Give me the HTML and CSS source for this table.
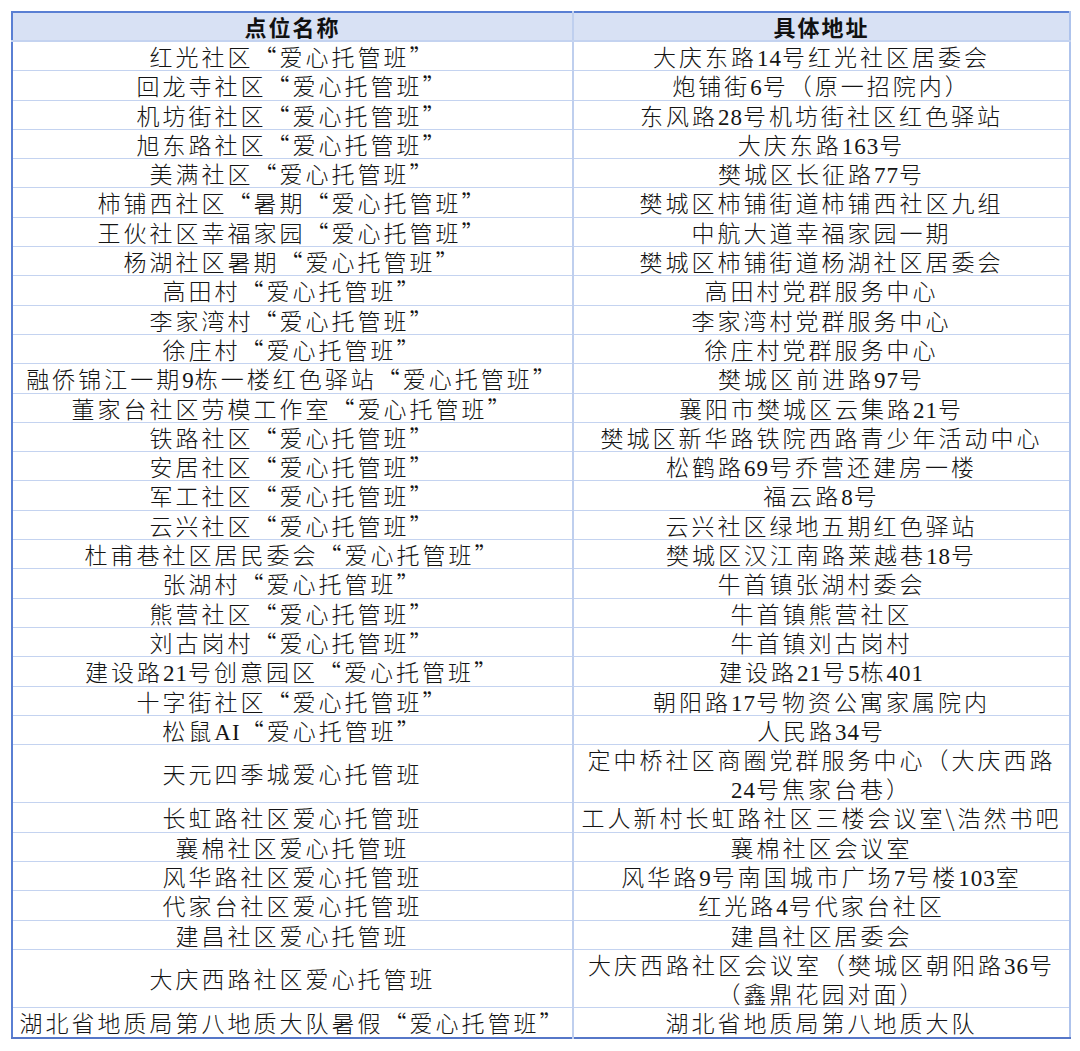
FILE: index.html
```html
<!DOCTYPE html>
<html lang="zh-CN">
<head>
<meta charset="utf-8">
<title>爱心托管班点位</title>
<link rel="stylesheet" href="styles.css">
</head>
<body>
<div class="wrap">
<table class="sheet">
<colgroup><col class="c-name"><col class="c-addr"></colgroup>
<thead>
<tr><th>点位名称</th><th class="addr">具体地址</th></tr>
</thead>
<tbody>
<tr><td>红光社区“爱心托管班”</td><td class="addr">大庆东路<span class="n">14</span>号红光社区居委会</td></tr>
<tr><td>回龙寺社区“爱心托管班”</td><td class="addr">炮铺街<span class="n">6</span>号（原一招院内）</td></tr>
<tr><td>机坊街社区“爱心托管班”</td><td class="addr">东风路<span class="n">28</span>号机坊街社区红色驿站</td></tr>
<tr><td>旭东路社区“爱心托管班”</td><td class="addr">大庆东路<span class="n">163</span>号</td></tr>
<tr><td>美满社区“爱心托管班”</td><td class="addr">樊城区长征路<span class="n">77</span>号</td></tr>
<tr><td>柿铺西社区“暑期“爱心托管班”</td><td class="addr">樊城区柿铺街道柿铺西社区九组</td></tr>
<tr><td>王伙社区幸福家园“爱心托管班”</td><td class="addr">中航大道幸福家园一期</td></tr>
<tr><td>杨湖社区暑期“爱心托管班”</td><td class="addr">樊城区柿铺街道杨湖社区居委会</td></tr>
<tr><td>高田村“爱心托管班”</td><td class="addr">高田村党群服务中心</td></tr>
<tr><td>李家湾村“爱心托管班”</td><td class="addr">李家湾村党群服务中心</td></tr>
<tr><td>徐庄村“爱心托管班”</td><td class="addr">徐庄村党群服务中心</td></tr>
<tr><td>融侨锦江一期<span class="n">9</span>栋一楼红色驿站“爱心托管班”</td><td class="addr">樊城区前进路<span class="n">97</span>号</td></tr>
<tr><td>董家台社区劳模工作室“爱心托管班”</td><td class="addr">襄阳市樊城区云集路<span class="n">21</span>号</td></tr>
<tr><td>铁路社区“爱心托管班”</td><td class="addr">樊城区新华路铁院西路青少年活动中心</td></tr>
<tr><td>安居社区“爱心托管班”</td><td class="addr">松鹤路<span class="n">69</span>号乔营还建房一楼</td></tr>
<tr><td>军工社区“爱心托管班”</td><td class="addr">福云路<span class="n">8</span>号</td></tr>
<tr><td>云兴社区“爱心托管班”</td><td class="addr">云兴社区绿地五期红色驿站</td></tr>
<tr><td>杜甫巷社区居民委会“爱心托管班”</td><td class="addr">樊城区汉江南路莱越巷<span class="n">18</span>号</td></tr>
<tr><td>张湖村“爱心托管班”</td><td class="addr">牛首镇张湖村委会</td></tr>
<tr><td>熊营社区“爱心托管班”</td><td class="addr">牛首镇熊营社区</td></tr>
<tr><td>刘古岗村“爱心托管班”</td><td class="addr">牛首镇刘古岗村</td></tr>
<tr><td>建设路<span class="n">21</span>号创意园区“爱心托管班”</td><td class="addr">建设路<span class="n">21</span>号<span class="n">5</span>栋<span class="n">401</span></td></tr>
<tr><td>十字街社区“爱心托管班”</td><td class="addr">朝阳路<span class="n">17</span>号物资公寓家属院内</td></tr>
<tr><td>松鼠<span class="n">AI</span>“爱心托管班”</td><td class="addr">人民路<span class="n">34</span>号</td></tr>
<tr class="tall"><td>天元四季城爱心托管班</td><td class="addr">定中桥社区商圈党群服务中心（大庆西路<br><span class="n">24</span>号焦家台巷）</td></tr>
<tr><td>长虹路社区爱心托管班</td><td class="addr">工人新村长虹路社区三楼会议室\浩然书吧</td></tr>
<tr><td>襄棉社区爱心托管班</td><td class="addr">襄棉社区会议室</td></tr>
<tr><td>风华路社区爱心托管班</td><td class="addr">风华路<span class="n">9</span>号南国城市广场<span class="n">7</span>号楼<span class="n">103</span>室</td></tr>
<tr><td>代家台社区爱心托管班</td><td class="addr">红光路<span class="n">4</span>号代家台社区</td></tr>
<tr><td>建昌社区爱心托管班</td><td class="addr">建昌社区居委会</td></tr>
<tr class="tall"><td>大庆西路社区爱心托管班</td><td class="addr">大庆西路社区会议室（樊城区朝阳路<span class="n">36</span>号<br>（鑫鼎花园对面）</td></tr>
<tr><td>湖北省地质局第八地质大队暑假“爱心托管班”</td><td class="addr">湖北省地质局第八地质大队</td></tr>
</tbody>
</table>
</div>
</body>
</html>
```

FILE: styles.css
```css
html, body {
  margin: 0;
  background: #ffffff;
}

body {
  font-family: "Noto Sans CJK SC", "Liberation Serif", sans-serif;
  color: #141414;
}

.wrap {
  padding: 11px 0 0 11px;
}

.sheet {
  border-collapse: collapse;
  table-layout: fixed;
  width: 1058px;
  border-top: 2px solid #5a7fd3;
  border-left: 2px solid #5a7fd3;
  border-bottom: 2px solid #5677c8;
  border-right: 2px solid #aec3ec;
}

.c-name { width: 561px; }
.c-addr { width: 497px; }

.sheet th,
.sheet td {
  padding: 0;
  text-align: center;
  vertical-align: middle;
  white-space: nowrap;
  border: 1px solid #c4d3f0;
}

.sheet th {
  background: #d8e1f4;
  font-weight: 700;
  font-size: 22px;
  letter-spacing: 2px;
  height: 27px;
  line-height: 27px;
  border-bottom: 2px solid #c4d3f0;
  color: #111;
}

.sheet td {
  font-weight: 300;
  font-size: 23px;
  letter-spacing: 3px;
  height: 28.3px;
  line-height: 28.3px;
}

.sheet .addr {
  border-left: 2px solid #bfcfee;
}

.sheet .tall td {
  line-height: 28.6px;
  height: 57.3px;
}

.n {
  font-family: "Liberation Serif", serif;
  letter-spacing: 1px;
  line-height: 0;
}
```
